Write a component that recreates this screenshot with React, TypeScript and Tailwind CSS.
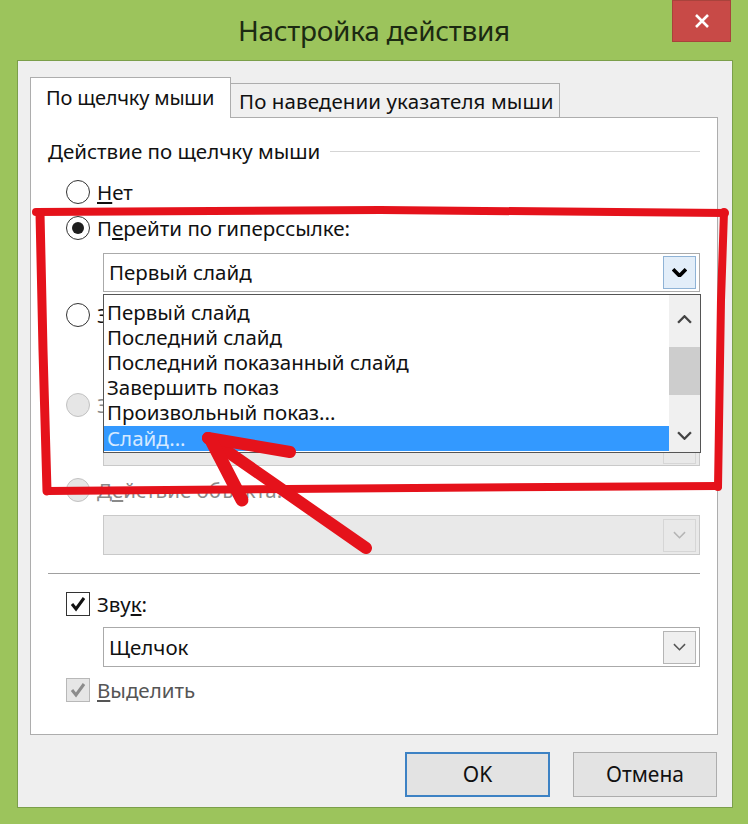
import React from "react";

const font = { fontFamily: '"Noto Sans", "Open Sans", sans-serif' };

const Chevron = ({ color = "#000", w = 2, size = 14 }: { color?: string; w?: number; size?: number }) => (
    <svg width={size} height={size * 0.6} viewBox="0 0 14 8">
        <polyline points="1,1 7,7 13,1" fill="none" stroke={color} strokeWidth={w} />
    </svg>
);

const Radio = ({ checked = false, disabled = false }: { checked?: boolean; disabled?: boolean }) => (
    <span
        className={
            "w-[24px] h-[24px] rounded-full border-[1.5px] flex items-center justify-center shrink-0 " +
            (disabled ? "border-[#c2c2c2] bg-[#e6e6e6]" : "border-[#333] bg-white")
        }
    >
        {checked && <span className="w-[12px] h-[12px] rounded-full bg-[#1e1e1e]" />}
    </span>
);

const Check = ({ disabled = false }: { disabled?: boolean }) => (
    <span
        className={
            "w-[24px] h-[24px] border-[1.5px] flex items-center justify-center shrink-0 " +
            (disabled ? "border-[#b8b8b8] bg-[#e6e6e6]" : "border-[#333] bg-white")
        }
    >
        <svg width="16" height="16" viewBox="0 0 16 16">
            <path d="M2 8 L6 13 L14 2" fill="none" stroke={disabled ? "#8c8c8c" : "#111"} strokeWidth="3" />
        </svg>
    </span>
);

const Combo = ({ text, disabled = false, hot = false }: { text?: string; disabled?: boolean; hot?: boolean }) => (
    <div
        className={
            "h-full flex items-center justify-between border pl-[5px] pr-[3px] " +
            (disabled ? "border-[#c9c9c9] bg-[#e9e9e9]" : "border-[#aaaaaa] bg-white")
        }
    >
        <span className="text-[20.5px] text-[#111]">{text}</span>
        <span
            className={
                "w-[33px] h-[33px] flex items-center justify-center border " +
                (hot ? "bg-[#e3eef9] border-[#8fb3d6]" : disabled ? "border-[#d6d6d6]" : "bg-[#efefef] border-[#b5b5b5]")
            }
        >
            {hot ? <Chevron w={3.5} size={15} /> : <Chevron color={disabled ? "#b5b5b5" : "#555"} w={1.6} size={13} />}
        </span>
    </div>
);

const items = ["Первый слайд", "Последний слайд", "Последний показанный слайд", "Завершить показ", "Произвольный показ...", "Слайд..."];

export default function App() {
    return (
        <div className="w-[748px] h-[824px] bg-[#9cc45c] relative overflow-hidden text-[#111]" style={font}>
            <div className="h-[60px] flex items-center justify-center">
                <span className="text-[28px] text-[#1c2a12] tracking-[-0.3px]">Настройка действия</span>
            </div>
            <div className="absolute top-0 left-[672px] w-[59px] h-[42px] bg-[#c84a47] border border-[#a8433c] flex items-center justify-center">
                <svg width="18" height="18" viewBox="0 0 18 18">
                    <path d="M3 3 L15 15 M15 3 L3 15" stroke="#fff" strokeWidth="2.6" />
                </svg>
            </div>

            <div className="ml-[17px] w-[716px] h-[748px] border border-[#7b9f4a] bg-[#efefef] pl-[12px] pt-[16px]">
                <div className="flex items-end h-[41px]">
                    <div className="w-[201px] h-[41px] bg-white border border-b-0 border-[#adadad] flex items-center pl-[15px] relative z-10 text-[20px] tracking-[-0.2px]">
                        По щелчку мыши
                    </div>
                    <div className="w-[329px] h-[35px] bg-[#f0f0f0] border border-l-0 border-b-0 border-[#adadad] flex items-center pl-[8px] text-[20.5px] tracking-[0.1px]">
                        По наведении указателя мыши
                    </div>
                </div>
                <div className="w-[688px] h-[618px] -mt-px bg-white border border-[#adadad] relative pl-[17px] text-[20.5px]">
                    <div className="flex items-center h-[24px] mt-[21px] pr-[17px]">
                        <span>Действие по щелчку мыши</span>
                        <span className="flex-1 h-px bg-[#d5d5d5] ml-[10px]" />
                    </div>
                    <div className="flex items-center gap-[7px] h-[24px] mt-[17px] ml-[18px]">
                        <Radio />
                        <span><u>Н</u>ет</span>
                    </div>
                    <div className="flex items-center gap-[7px] h-[24px] mt-[12px] ml-[18px]">
                        <Radio checked />
                        <span>П<u>е</u>рейти по гиперссылке:</span>
                    </div>
                    <div className="h-[39px] mt-[13px] ml-[55px] mr-[17px]">
                        <Combo text="Первый слайд" hot />
                    </div>
                    <div className="flex items-center gap-[7px] h-[24px] mt-[11px] ml-[18px]">
                        <Radio />
                        <span>Запуск программы:</span>
                    </div>
                    <div className="h-[38px] mt-[12px] ml-[55px] mr-[17px] border border-[#c9c9c9] bg-[#f3f3f3]" />
                    <div className="flex items-center gap-[7px] h-[24px] mt-[16px] ml-[18px]">
                        <Radio disabled />
                        <span className="text-[#8a8a8a]">Запуск макроса:</span>
                    </div>
                    <div className="h-[38px] mt-[11px] ml-[55px] mr-[17px]">
                        <Combo disabled />
                    </div>
                    <div className="flex items-center gap-[7px] h-[24px] mt-[12px] ml-[18px]">
                        <Radio disabled />
                        <span className="text-[#8a8a8a]">Д<u>е</u>йствие объекта:</span>
                    </div>
                    <div className="h-[40px] mt-[13px] ml-[55px] mr-[17px]">
                        <Combo disabled />
                    </div>
                    <div className="h-px mt-[18px] mr-[17px] bg-[#a0a0a0]" />
                    <div className="flex items-center gap-[7px] h-[24px] mt-[18px] ml-[18px]">
                        <Check />
                        <span>Зву<u>к</u>:</span>
                    </div>
                    <div className="h-[40px] mt-[11px] ml-[55px] mr-[17px]">
                        <Combo text="Щелчок" />
                    </div>
                    <div className="flex items-center gap-[7px] h-[24px] mt-[11px] ml-[18px]">
                        <Check disabled />
                        <span className="text-[#555]"><u>В</u>ыделить</span>
                    </div>

                    {/* открытый список */}
                    <div className="absolute left-[72px] top-[176px] w-[598px] h-[159px] bg-white border-[1.5px] border-[#555] flex">
                        <div className="flex-1 pt-[5px]">
                            {items.map((t, i) => (
                                <div
                                    key={t}
                                    className={
                                        "h-[25px] flex items-center pl-[3px] " +
                                        (i === 5 ? "bg-[#3399ff] text-[#d6e9ff] h-[23px] mt-px" : "")
                                    }
                                >
                                    {t}
                                </div>
                            ))}
                        </div>
                        <div className="w-[31px] bg-[#f0f0f0] flex flex-col items-center justify-between pt-[20px] pb-[12px]">
                            <span className="rotate-180"><Chevron color="#444" w={2.2} size={15} /></span>
                            <span className="w-full h-[48px] bg-[#cdcdcd] -mt-[14px]" />
                            <Chevron color="#444" w={2.2} size={15} />
                        </div>
                    </div>
                </div>

                <div className="flex justify-end gap-[23px] mt-[17px] pr-[15px]">
                    <button className="w-[145px] h-[45px] bg-[#e3e3e3] border-2 border-[#3d82c4] text-[21px]">OK</button>
                    <button className="w-[144px] h-[45px] bg-[#e3e3e3] border border-[#adadad] text-[21px]">Отмена</button>
                </div>
            </div>

            {/* пометки красным */}
            <svg className="absolute inset-0 pointer-events-none" width="748" height="824">
                <g fill="none" stroke="#e5121b" strokeLinecap="round" strokeLinejoin="round">
                    <path d="M36 212 L380 210 L725 213" strokeWidth="8" />
                    <path d="M724 212 L721 300 L718 487" strokeWidth="8" />
                    <path d="M718 486 L550 487 L47 491" strokeWidth="8" />
                    <path d="M40 213 L43 350 L47 491" strokeWidth="9" />
                    <path d="M366 548 L208 438" strokeWidth="12" />
                    <path d="M208 438 L290 452" strokeWidth="12" />
                    <path d="M212 442 L242 500" strokeWidth="13" />
                </g>
            </svg>
        </div>
    );
}
